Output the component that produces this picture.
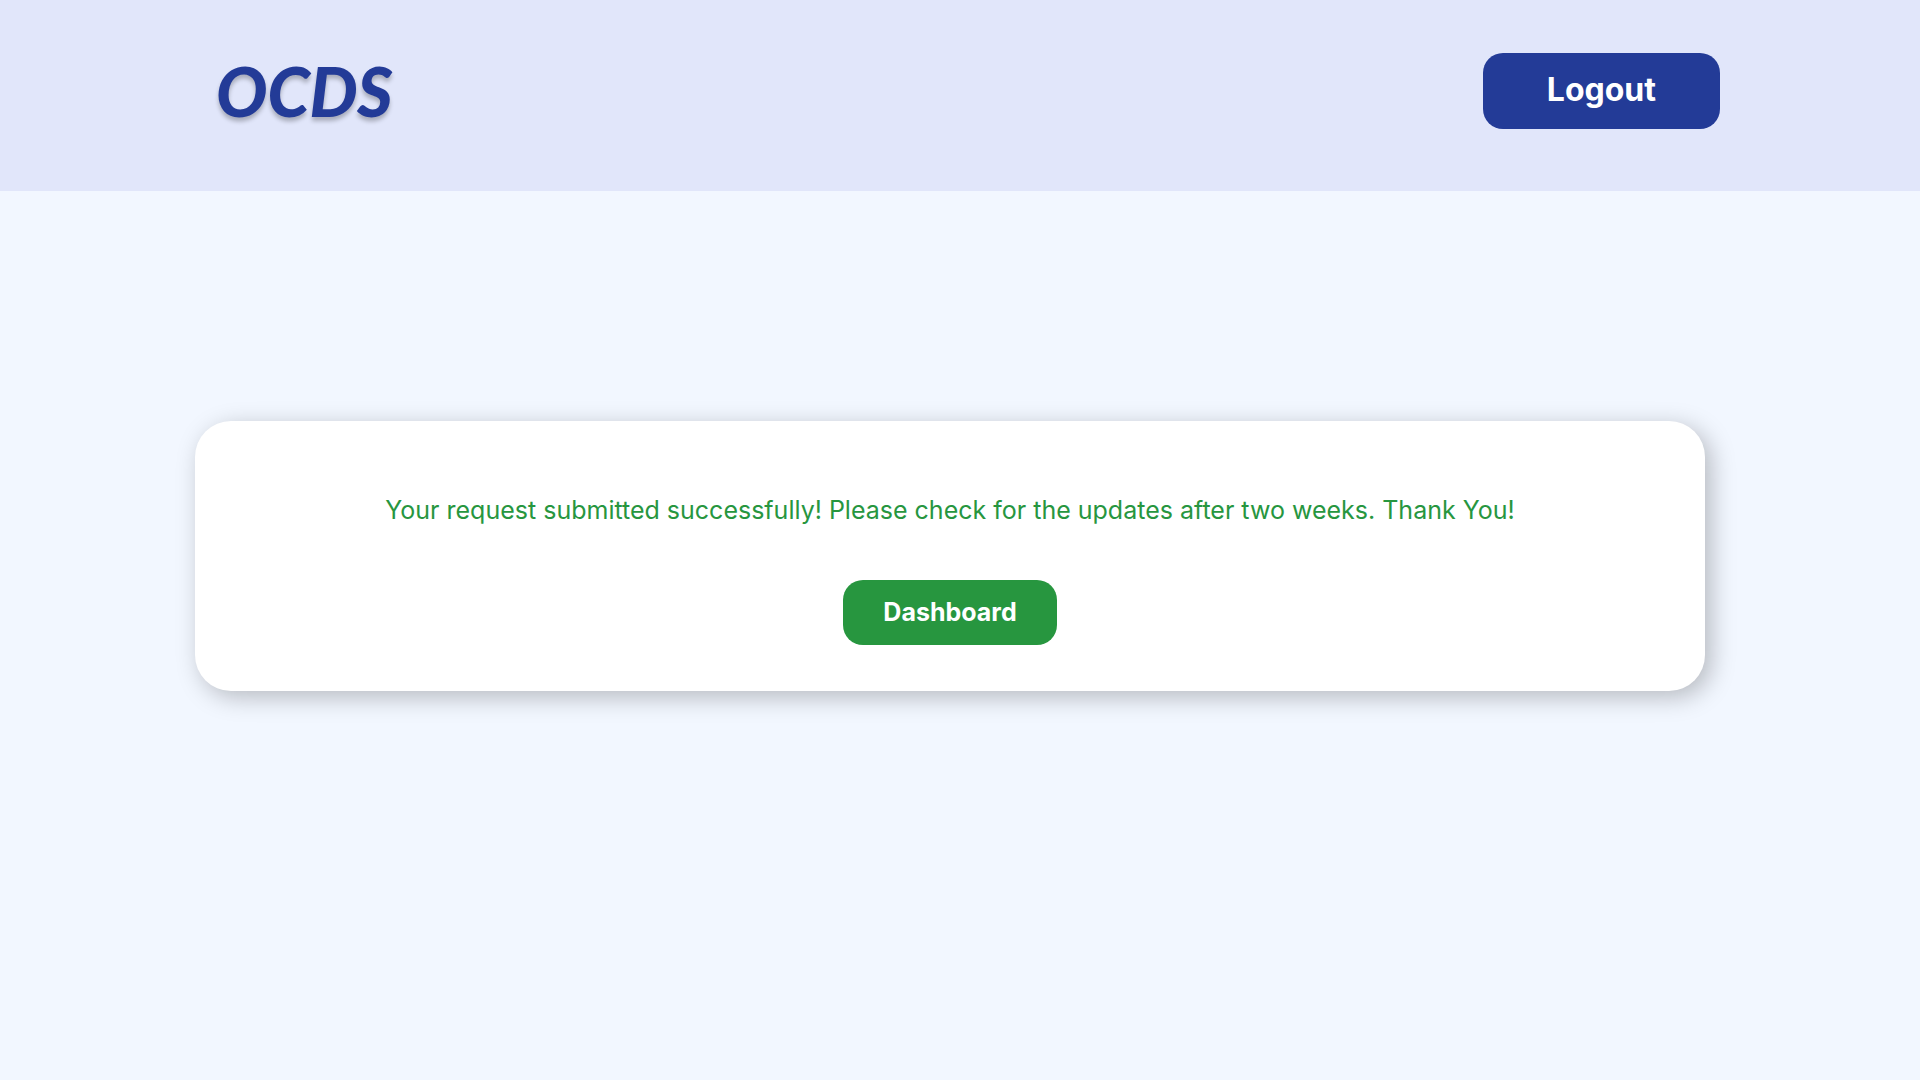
<header>
  <a class="logo" href="/">OCDS</a>
  <button class="logout" type="button">Logout</button>
</header>

<main>
  <section class="card">
    <p>Your request submitted successfully! Please check for the updates after two weeks. Thank You!</p>
    <button class="dashboard" type="button">Dashboard</button>
  </section>
</main>

<style>
  :global(body) {
    margin: 0;
    background: #f2f7ff;
    font-family: Inter, sans-serif;
  }

  header {
    display: flex;
    align-items: flex-start;
    justify-content: space-between;
    padding: 53px 200px 62px 216px;
    background: #e1e6fa;
  }

  .logo {
    color: #233b97;
    font-family: Lato, sans-serif;
    font-size: 68px;
    font-style: italic;
    font-weight: 900;
    line-height: 76px;
    text-decoration: none;
    text-shadow: 0 4px 4px rgba(0, 0, 0, 0.25);
  }

  button {
    border: 0;
    border-radius: 20px;
    color: #fff;
    font-family: inherit;
    font-weight: 700;
    cursor: pointer;
  }

  .logout {
    padding: 18px 64px 20px;
    background: #233b97;
    font-size: 32px;
    line-height: 38px;
  }

  main {
    padding: 230px 215px 60px 195px;
  }

  .card {
    display: flex;
    flex-direction: column;
    align-items: center;
    gap: 55px;
    padding: 74px 40px 46px;
    border-radius: 36px;
    background: #fff;
    box-shadow: 6px 6px 25px rgba(0, 0, 0, 0.25);
  }

  p {
    margin: 0;
    color: #27963f;
    font-size: 25px;
    font-weight: 400;
    line-height: 30px;
    text-align: center;
  }

  .dashboard {
    padding: 17px 40px 18px;
    background: #27963f;
    font-size: 25px;
    line-height: 30px;
  }
</style>
